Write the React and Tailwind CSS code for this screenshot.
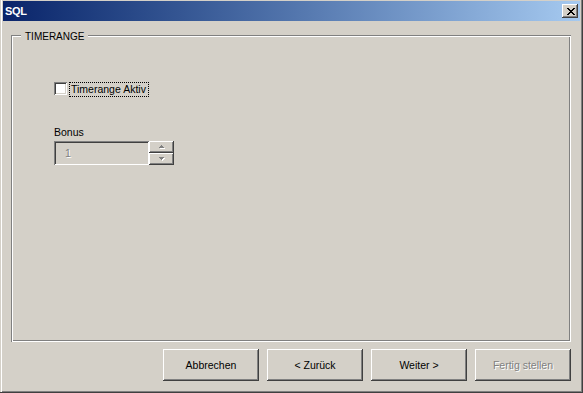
import React from "react";

const raised =
  "shadow-[inset_-1px_-1px_#404040,inset_1px_1px_#ffffff,inset_-2px_-2px_#808080,inset_2px_2px_#d4d0c8]";

function CloseGlyph() {
  const rows = [
    [0, 1, 6, 7],
    [1, 2, 5, 6],
    [2, 3, 4, 5],
    [3, 4],
    [2, 3, 4, 5],
    [1, 2, 5, 6],
    [0, 1, 6, 7],
  ];
  return (
    <svg width="8" height="7" viewBox="0 0 8 7" shapeRendering="crispEdges">
      {rows.map((cols, y) =>
        cols.map((x) => <rect key={`${x}-${y}`} x={x} y={y} width="1" height="1" fill="#000" />)
      )}
    </svg>
  );
}

function Arrow({ up }) {
  const rows = up
    ? [
        [2, 1],
        [1, 3],
        [0, 5],
      ]
    : [
        [0, 5],
        [1, 3],
        [2, 1],
      ];
  return (
    <svg width="6" height="4" viewBox="0 0 6 4" shapeRendering="crispEdges">
      {rows.map(([x, w], y) => (
        <rect key={`s${y}`} x={x + 1} y={y + 1} width={w} height="1" fill="#ffffff" />
      ))}
      {rows.map(([x, w], y) => (
        <rect key={`f${y}`} x={x} y={y} width={w} height="1" fill="#808080" />
      ))}
    </svg>
  );
}

function Button({ children, disabled }) {
  return (
    <div
      className={`w-[96px] h-[32px] flex items-center justify-center bg-[#d4d0c8] ${raised} ${
        disabled ? "text-[#808080] [text-shadow:1px_1px_0_#ffffff]" : "text-black"
      }`}
    >
      {children}
    </div>
  );
}

export default function App() {
  return (
    <div className="w-[583px] h-[393px] bg-[#d4d0c8] pt-[1px] px-[3px] flex flex-col font-['Liberation_Sans',Arial,sans-serif] text-[10.5px] leading-[13px] text-black shadow-[inset_-1px_-1px_#404040,inset_1px_0_#d4d0c8,inset_2px_0_#ffffff,inset_-2px_-2px_#808080]">
      {/* Title bar */}
      <div className="h-[20px] flex items-center justify-between bg-linear-to-r from-[#0a246a] to-[#a6caf0] pl-[2px] pr-[2px]">
        <span className="text-white font-bold text-[11px] tracking-[-0.3px]">SQL</span>
        <div className={`w-[16px] h-[14px] bg-[#d4d0c8] flex items-center justify-center pl-[1px] ${raised}`}>
          <CloseGlyph />
        </div>
      </div>

      {/* Body */}
      <div className="flex flex-col pl-[8px] pr-[9px] mt-[14px]">
        {/* Group box */}
        <div className="relative h-[307px] shadow-[inset_1px_1px_#808080,inset_-1px_-1px_#ffffff,inset_2px_2px_#ffffff,inset_-2px_-2px_#808080] flex flex-col pl-[43px] pt-[47px]">
          <div className="absolute top-[-4px] left-[10px] bg-[#d4d0c8] px-[4px] text-[10px] leading-[12px]">
            TIMERANGE
          </div>

          <div className="flex items-start">
            <div className="w-[13px] h-[13px] bg-white shadow-[inset_1px_1px_#808080,inset_-1px_-1px_#ffffff,inset_2px_2px_#404040,inset_-2px_-2px_#d4d0c8]" />
            <div className="ml-[2px] w-[80px] h-[15px] border border-dotted border-black flex items-center pl-[1px]">
              Timerange Aktiv
            </div>
          </div>

          <div className="mt-[29px]">Bonus</div>

          <div className="mt-[2px] flex">
            <div className="w-[95px] h-[24px] flex items-center pl-[11px] bg-[#d4d0c8] text-[#808080] [text-shadow:1px_1px_0_#ffffff] shadow-[inset_1px_1px_#808080,inset_-1px_-1px_#ffffff,inset_2px_2px_#404040,inset_-2px_-2px_#d4d0c8]">
              1
            </div>
            <div className="w-[25px] h-[24px] flex flex-col">
              <div className={`h-[12px] flex items-center justify-center ${raised}`}>
                <Arrow up />
              </div>
              <div className={`h-[12px] flex items-center justify-center ${raised}`}>
                <Arrow />
              </div>
            </div>
          </div>
        </div>

        {/* Buttons */}
        <div className="mt-[7px] flex justify-end gap-[8px]">
          <Button>Abbrechen</Button>
          <Button>&lt; Zurück</Button>
          <Button>Weiter &gt;</Button>
          <Button disabled>Fertig stellen</Button>
        </div>
      </div>
    </div>
  );
}
